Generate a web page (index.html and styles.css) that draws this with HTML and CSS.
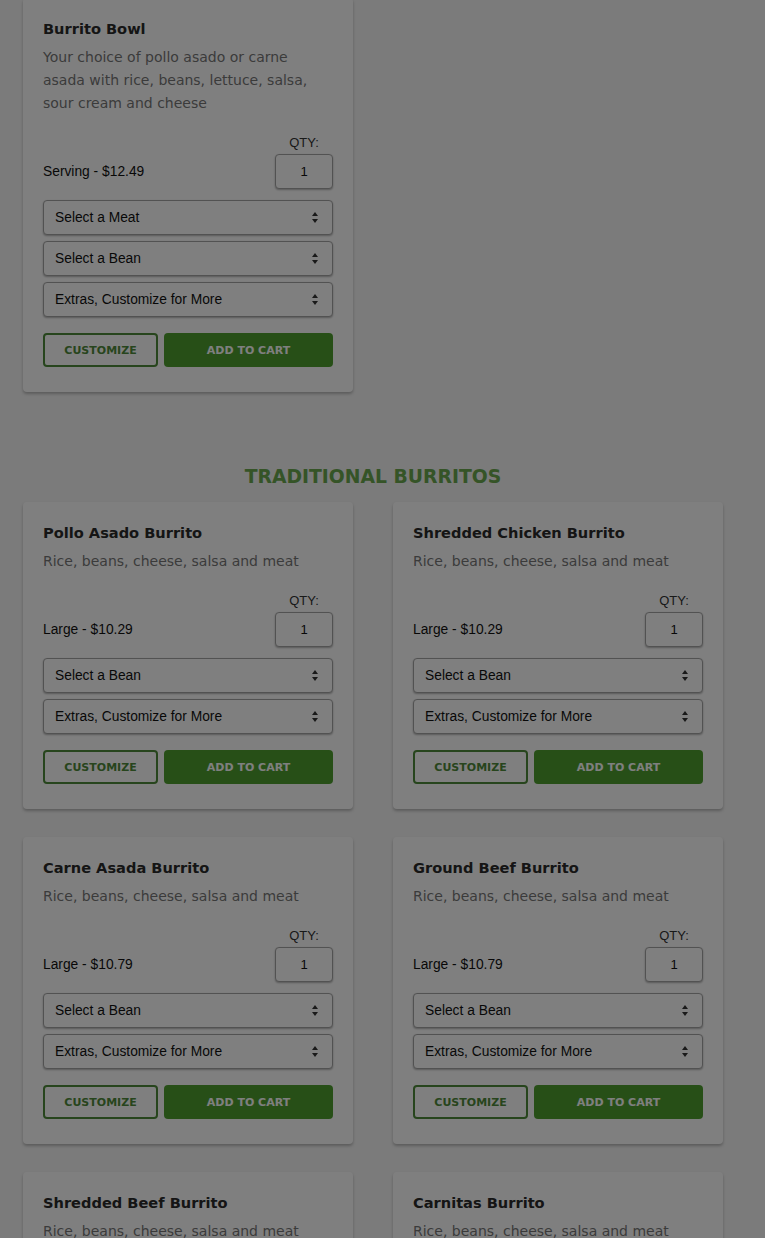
FILE: index.html
```html
<!DOCTYPE html>
<html lang="en">
<head>
  <meta charset="UTF-8" />
  <meta name="viewport" content="width=device-width, initial-scale=1.0"/>
  <title>Menu – Burritos</title>
  <link rel="stylesheet" href="styles.css">
</head>
<body>

  <!-- Bowls -->
  <section class="menu-section first">
    <div class="menu-grid">
      <div class="card">
        <h3 class="card-title">Burrito Bowl</h3>
        <p class="card-desc">Your choice of pollo asado or carne asada with rice, beans, lettuce, salsa, sour cream and cheese</p>
        <div class="order-row">
          <span class="price">Serving - $12.49</span>
          <div class="qty">
            <label class="qty-label">QTY:</label>
            <input class="qty-input" type="text" value="1">
          </div>
        </div>
        <div class="options">
          <div class="select-wrap">
            <select><option>Select a Meat</option></select>
            <svg viewBox="0 0 6 11" width="6" height="11"><path d="M3 0L6 4H0Z M3 11L0 7H6Z" fill="#333"/></svg>
          </div>
          <div class="select-wrap">
            <select><option>Select a Bean</option></select>
            <svg viewBox="0 0 6 11" width="6" height="11"><path d="M3 0L6 4H0Z M3 11L0 7H6Z" fill="#333"/></svg>
          </div>
          <div class="select-wrap">
            <select><option>Extras, Customize for More</option></select>
            <svg viewBox="0 0 6 11" width="6" height="11"><path d="M3 0L6 4H0Z M3 11L0 7H6Z" fill="#333"/></svg>
          </div>
        </div>
        <div class="btn-row">
          <button class="btn-outline">CUSTOMIZE</button>
          <button class="btn-primary">ADD TO CART</button>
        </div>
      </div>
    </div>
  </section>

  <!-- Traditional Burritos -->
  <section class="menu-section">
    <h2 class="section-title">TRADITIONAL BURRITOS</h2>
    <div class="menu-grid">

      <div class="card">
        <h3 class="card-title">Pollo Asado Burrito</h3>
        <p class="card-desc">Rice, beans, cheese, salsa and meat</p>
        <div class="order-row">
          <span class="price">Large - $10.29</span>
          <div class="qty">
            <label class="qty-label">QTY:</label>
            <input class="qty-input" type="text" value="1">
          </div>
        </div>
        <div class="options">
          <div class="select-wrap">
            <select><option>Select a Bean</option></select>
            <svg viewBox="0 0 6 11" width="6" height="11"><path d="M3 0L6 4H0Z M3 11L0 7H6Z" fill="#333"/></svg>
          </div>
          <div class="select-wrap">
            <select><option>Extras, Customize for More</option></select>
            <svg viewBox="0 0 6 11" width="6" height="11"><path d="M3 0L6 4H0Z M3 11L0 7H6Z" fill="#333"/></svg>
          </div>
        </div>
        <div class="btn-row">
          <button class="btn-outline">CUSTOMIZE</button>
          <button class="btn-primary">ADD TO CART</button>
        </div>
      </div>

      <div class="card">
        <h3 class="card-title">Shredded Chicken Burrito</h3>
        <p class="card-desc">Rice, beans, cheese, salsa and meat</p>
        <div class="order-row">
          <span class="price">Large - $10.29</span>
          <div class="qty">
            <label class="qty-label">QTY:</label>
            <input class="qty-input" type="text" value="1">
          </div>
        </div>
        <div class="options">
          <div class="select-wrap">
            <select><option>Select a Bean</option></select>
            <svg viewBox="0 0 6 11" width="6" height="11"><path d="M3 0L6 4H0Z M3 11L0 7H6Z" fill="#333"/></svg>
          </div>
          <div class="select-wrap">
            <select><option>Extras, Customize for More</option></select>
            <svg viewBox="0 0 6 11" width="6" height="11"><path d="M3 0L6 4H0Z M3 11L0 7H6Z" fill="#333"/></svg>
          </div>
        </div>
        <div class="btn-row">
          <button class="btn-outline">CUSTOMIZE</button>
          <button class="btn-primary">ADD TO CART</button>
        </div>
      </div>

      <div class="card">
        <h3 class="card-title">Carne Asada Burrito</h3>
        <p class="card-desc">Rice, beans, cheese, salsa and meat</p>
        <div class="order-row">
          <span class="price">Large - $10.79</span>
          <div class="qty">
            <label class="qty-label">QTY:</label>
            <input class="qty-input" type="text" value="1">
          </div>
        </div>
        <div class="options">
          <div class="select-wrap">
            <select><option>Select a Bean</option></select>
            <svg viewBox="0 0 6 11" width="6" height="11"><path d="M3 0L6 4H0Z M3 11L0 7H6Z" fill="#333"/></svg>
          </div>
          <div class="select-wrap">
            <select><option>Extras, Customize for More</option></select>
            <svg viewBox="0 0 6 11" width="6" height="11"><path d="M3 0L6 4H0Z M3 11L0 7H6Z" fill="#333"/></svg>
          </div>
        </div>
        <div class="btn-row">
          <button class="btn-outline">CUSTOMIZE</button>
          <button class="btn-primary">ADD TO CART</button>
        </div>
      </div>

      <div class="card">
        <h3 class="card-title">Ground Beef Burrito</h3>
        <p class="card-desc">Rice, beans, cheese, salsa and meat</p>
        <div class="order-row">
          <span class="price">Large - $10.79</span>
          <div class="qty">
            <label class="qty-label">QTY:</label>
            <input class="qty-input" type="text" value="1">
          </div>
        </div>
        <div class="options">
          <div class="select-wrap">
            <select><option>Select a Bean</option></select>
            <svg viewBox="0 0 6 11" width="6" height="11"><path d="M3 0L6 4H0Z M3 11L0 7H6Z" fill="#333"/></svg>
          </div>
          <div class="select-wrap">
            <select><option>Extras, Customize for More</option></select>
            <svg viewBox="0 0 6 11" width="6" height="11"><path d="M3 0L6 4H0Z M3 11L0 7H6Z" fill="#333"/></svg>
          </div>
        </div>
        <div class="btn-row">
          <button class="btn-outline">CUSTOMIZE</button>
          <button class="btn-primary">ADD TO CART</button>
        </div>
      </div>

      <div class="card">
        <h3 class="card-title">Shredded Beef Burrito</h3>
        <p class="card-desc">Rice, beans, cheese, salsa and meat</p>
        <div class="order-row">
          <span class="price">Large - $10.79</span>
          <div class="qty">
            <label class="qty-label">QTY:</label>
            <input class="qty-input" type="text" value="1">
          </div>
        </div>
      </div>

      <div class="card">
        <h3 class="card-title">Carnitas Burrito</h3>
        <p class="card-desc">Rice, beans, cheese, salsa and meat</p>
        <div class="order-row">
          <span class="price">Large - $10.79</span>
          <div class="qty">
            <label class="qty-label">QTY:</label>
            <input class="qty-input" type="text" value="1">
          </div>
        </div>
      </div>

    </div>
  </section>

  <!-- modal backdrop -->
  <div class="overlay"></div>

</body>
</html>
```

FILE: styles.css
```css
* {
  box-sizing: border-box;
}
body {
  margin: 0;
  padding: 0 0 40px 23px;
  background: #f6f6f6;
  font-family: 'DejaVu Sans', sans-serif;
  color: #333;
}
.menu-section.first {
  margin-top: -2px;
}
.section-title {
  width: 700px;
  margin: 73px 0 13px;
  text-align: center;
  font-size: 18.8px;
  line-height: 24px;
  font-weight: bold;
  color: #6aa84f;
}
.menu-grid {
  display: grid;
  grid-template-columns: 330px 330px;
  column-gap: 40px;
  row-gap: 28px;
}
.card {
  background: #fff;
  border-radius: 4px;
  padding: 21px 20px 25px;
  box-shadow: 0 2px 3px rgba(0,0,0,0.25);
}
.card-title {
  margin: 0 0 7px;
  font-size: 14.6px;
  line-height: 20px;
  font-weight: bold;
  color: #2b2b2b;
}
.card-desc {
  margin: 0;
  font-size: 14px;
  line-height: 23px;
  color: #777;
}
.order-row {
  display: flex;
  justify-content: space-between;
  align-items: flex-end;
  margin-top: 20px;
  font-family: 'Liberation Sans', Arial, sans-serif;
  font-size: 13.8px;
}
.price {
  line-height: 35px;
  color: #111;
}
.qty {
  display: flex;
  flex-direction: column;
  align-items: center;
}
.qty-label {
  font-size: 13px;
  line-height: 16px;
  margin-bottom: 3px;
  color: #333;
}
.qty-input {
  width: 58px;
  height: 35px;
  border: 1px solid #a5a5a5;
  border-radius: 4px;
  text-align: center;
  font-family: inherit;
  font-size: 13px;
  color: #111;
  background: #fff;
  box-shadow: 0 1px 2px rgba(0,0,0,0.3);
}
.options {
  display: flex;
  flex-direction: column;
  gap: 6px;
  margin-top: 11px;
}
.select-wrap {
  position: relative;
}
.select-wrap select {
  appearance: none;
  -webkit-appearance: none;
  width: 100%;
  height: 35px;
  padding: 0 11px;
  border: 1px solid #a5a5a5;
  border-radius: 4px;
  background: #fff;
  font-family: 'Liberation Sans', Arial, sans-serif;
  font-size: 13.8px;
  color: #111;
  box-shadow: 0 1px 2px rgba(0,0,0,0.3);
}
.select-wrap svg {
  position: absolute;
  right: 15px;
  top: 12px;
  pointer-events: none;
}
.btn-row {
  display: flex;
  gap: 6px;
  margin-top: 16px;
}
.btn-row button {
  height: 34px;
  border-radius: 4px;
  font-family: 'DejaVu Sans', sans-serif;
  font-size: 11px;
  font-weight: bold;
  cursor: pointer;
}
.btn-outline {
  width: 115px;
  background: #fff;
  border: 2px solid #4f8a3a;
  color: #4f8a3a;
}
.btn-primary {
  flex: 1;
  background: #4f9f2f;
  border: none;
  color: #fff;
}
.overlay {
  position: fixed;
  inset: 0;
  background: rgba(0,0,0,0.5);
}
```
